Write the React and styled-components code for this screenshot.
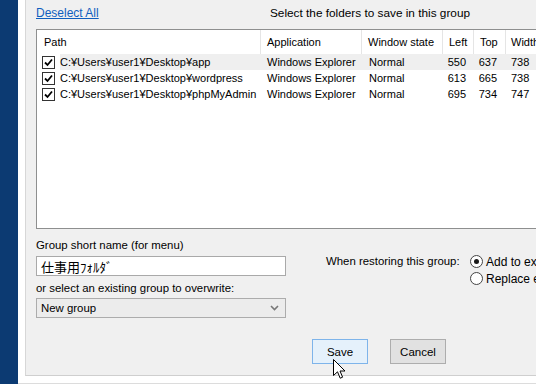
import React from 'react';
import styled, {createGlobalStyle} from 'styled-components';

const GlobalStyle = createGlobalStyle`
  html, body {
    margin: 0;
    padding: 0;
    background: #ffffff;
  }
  body {
    font-family: "Liberation Sans", Arial, "Noto Sans CJK JP", sans-serif;
    font-size: 12px;
    color: #000;
  }
`;

const Screen = styled.div`
  position: relative;
  display: flex;
  width: 536px;
  height: 384px;
  overflow: hidden;
  background: #fff;
`;

const Sidebar = styled.div`
  flex: 0 0 18px;
  background: #0c3a72;
`;

const Frame = styled.div`
  flex: 1;
  display: flex;
  flex-direction: column;
  padding: 0 0 7px 7px;
  border-bottom: 1px solid #dcdcdc;
  min-width: 0;
`;

const Panel = styled.div`
  flex: 1;
  background: #f0f0f0;
  border-left: 1px solid #d7d7d7;
  border-bottom: 1px solid #cfcfcf;
  padding-left: 10px;
  display: flex;
  flex-direction: column;
  min-width: 0;
`;

const TopBar = styled.div`
  display: flex;
  align-items: center;
  height: 26px;
`;

const Link = styled.a`
  color: #0f5fbf;
  text-decoration: underline;
  width: 234px;
  cursor: pointer;
`;

const Hint = styled.span`
  font-size: 11.8px;
  white-space: nowrap;
`;

const ListBox = styled.div`
  margin-top: 3px;
  width: 530px;
  height: 198px;
  background: #fff;
  border: 1px solid #8e8f8f;
  flex-shrink: 0;
  font-size: 11px;
`;

const columns = '224px 101px 81px 31px 32px 70px';

const HeaderRow = styled.div`
  display: grid;
  grid-template-columns: ${columns};
  height: 24px;
`;

const HeaderCell = styled.div`
  display: flex;
  align-items: center;
  padding-left: ${p => p.$pad || 6}px;
  border-right: 1px solid #e5e5e5;
  white-space: nowrap;
  overflow: hidden;
`;

const Row = styled.div`
  display: grid;
  grid-template-columns: ${columns};
  height: 16px;
  align-items: stretch;
  background: ${p => (p.$selected ? '#efefef' : '#fff')};
`;

const PathCell = styled.div`
  display: flex;
  align-items: center;
  white-space: nowrap;
  overflow: hidden;
`;

const CheckSlot = styled.div`
  flex: 0 0 23px;
  align-self: stretch;
  display: flex;
  align-items: center;
  padding-left: 5px;
  box-sizing: border-box;
  background: #fff;
`;

const CheckBox = styled.div`
  width: 11px;
  height: 11px;
  border: 1px solid #333;
  background: #fff;
  display: flex;
  align-items: center;
  justify-content: center;
`;

const Cell = styled.div`
  display: flex;
  align-items: center;
  justify-content: ${p => (p.$right ? 'flex-end' : 'flex-start')};
  padding: 0 ${p => (p.$right ? p.$pr || 8 : 0)}px 0 ${p => (p.$right ? 0 : p.$pl || 6)}px;
  white-space: nowrap;
  overflow: hidden;
`;

const Bottom = styled.div`
  display: flex;
  align-items: flex-start;
  font-size: 11.4px;
`;

const LeftCol = styled.div`
  flex: 0 0 250px;
  display: flex;
  flex-direction: column;
`;

const Label = styled.div`
  height: 14px;
  line-height: 14px;
  margin-top: ${p => p.$mt}px;
  white-space: nowrap;
`;

const TextInput = styled.div`
  margin-top: 4px;
  height: 20px;
  box-sizing: border-box;
  border: 1px solid #a9a9a9;
  background: #fff;
  padding-left: 4px;
  display: flex;
  align-items: center;
  font-family: "Noto Sans CJK JP", sans-serif;
  font-size: 13px;
`;

const Select = styled.div`
  margin-top: 3px;
  height: 20px;
  box-sizing: border-box;
  border: 1px solid #acacac;
  background: #ececec;
  padding: 0 6px 0 4px;
  display: flex;
  align-items: center;
  justify-content: space-between;
`;

const RestoreGroup = styled.div`
  flex-shrink: 0;
  margin-left: 40px;
  margin-top: 24px;
  display: flex;
  align-items: flex-start;
  white-space: nowrap;
`;

const RestoreLabel = styled.div`
  width: 144px;
  height: 17px;
  line-height: 17px;
`;

const RadioList = styled.div`
  display: flex;
  flex-direction: column;
  font-size: 12px;
`;

const RadioRow = styled.div`
  display: flex;
  align-items: center;
  height: 17px;
  gap: 3px;
`;

const Radio = styled.div`
  width: 11px;
  height: 11px;
  border-radius: 50%;
  border: 1px solid #444;
  background: #fff;
  display: flex;
  align-items: center;
  justify-content: center;

  &::after {
    content: '';
    width: 5px;
    height: 5px;
    border-radius: 50%;
    background: ${p => (p.$checked ? '#1a1a1a' : 'transparent')};
  }
`;

const ButtonRow = styled.div`
  margin-top: 21px;
  padding-left: 276px;
  display: flex;
  gap: 22px;
`;

const Button = styled.div`
  width: 56px;
  height: 25px;
  box-sizing: border-box;
  display: flex;
  align-items: center;
  justify-content: center;
  font-size: 11.5px;
  border: 1px solid ${p => (p.$hover ? '#7eb4ea' : '#adadad')};
  background: ${p => (p.$hover ? '#e5f1fb' : '#e1e1e1')};
`;

const Cursor = styled.svg`
  position: absolute;
  left: 333px;
  top: 359px;
`;

const rows = [
  {path: 'C:¥Users¥user1¥Desktop¥app', left: 550, top: 637, width: 738, selected: true},
  {path: 'C:¥Users¥user1¥Desktop¥wordpress', left: 613, top: 665, width: 738},
  {path: 'C:¥Users¥user1¥Desktop¥phpMyAdmin', left: 695, top: 734, width: 747},
];

const Check = () => (
  <svg width="9" height="9" viewBox="0 0 9 9">
    <path d="M1 4.5 L3.5 7 L8 1.5" fill="none" stroke="#000" strokeWidth="1.8" />
  </svg>
);

export default function App() {
  return (
    <>
      <GlobalStyle />
      <Screen>
        <Sidebar />
        <Frame>
          <Panel>
            <TopBar>
              <Link>Deselect All</Link>
              <Hint>Select the folders to save in this group</Hint>
            </TopBar>

            <ListBox>
              <HeaderRow>
                <HeaderCell $pad={7}>Path</HeaderCell>
                <HeaderCell>Application</HeaderCell>
                <HeaderCell>Window state</HeaderCell>
                <HeaderCell>Left</HeaderCell>
                <HeaderCell>Top</HeaderCell>
                <HeaderCell $pad={5}>Width</HeaderCell>
              </HeaderRow>
              {rows.map(r => (
                <Row key={r.path} $selected={r.selected}>
                  <PathCell>
                    <CheckSlot>
                      <CheckBox>
                        <Check />
                      </CheckBox>
                    </CheckSlot>
                    {r.path}
                  </PathCell>
                  <Cell>Windows Explorer</Cell>
                  <Cell $pl={7}>Normal</Cell>
                  <Cell $right $pr={8}>{r.left}</Cell>
                  <Cell $right $pr={9}>{r.top}</Cell>
                  <Cell $pl={5}>{r.width}</Cell>
                </Row>
              ))}
            </ListBox>

            <Bottom>
              <LeftCol>
                <Label $mt={9}>Group short name (for menu)</Label>
                <TextInput>仕事用ﾌｫﾙﾀﾞ</TextInput>
                <Label $mt={5}>or select an existing group to overwrite:</Label>
                <Select>
                  <span>New group</span>
                  <svg width="9" height="6" viewBox="0 0 9 6">
                    <path d="M1 1 L4.5 4.5 L8 1" fill="none" stroke="#777" strokeWidth="1.6" />
                  </svg>
                </Select>
              </LeftCol>
              <RestoreGroup>
                <RestoreLabel>When restoring this group:</RestoreLabel>
                <RadioList>
                  <RadioRow>
                    <Radio $checked />
                    Add to existing windows
                  </RadioRow>
                  <RadioRow>
                    <Radio />
                    Replace existing windows
                  </RadioRow>
                </RadioList>
              </RestoreGroup>
            </Bottom>

            <ButtonRow>
              <Button $hover>Save</Button>
              <Button>Cancel</Button>
            </ButtonRow>
          </Panel>
        </Frame>
        <Cursor width="13" height="21" viewBox="0 0 13 21">
          <path
            d="M0.5 0.5 L0.5 16.5 L4.5 12.8 L7.2 19.2 L9.6 18.2 L7 12 L12 12 Z"
            fill="#fff"
            stroke="#000"
            strokeWidth="1"
            strokeLinejoin="round"
          />
        </Cursor>
      </Screen>
    </>
  );
}
